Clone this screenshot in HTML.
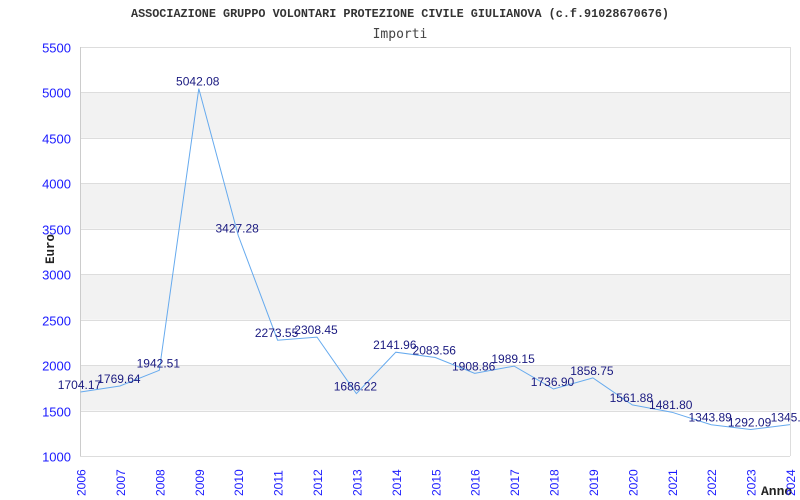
<!DOCTYPE html>
<html><head><meta charset="utf-8"><style>
html,body{margin:0;padding:0;background:#fff;width:800px;height:500px;overflow:hidden}
</style></head><body>
<svg id="c" width="800" height="500" xmlns="http://www.w3.org/2000/svg" font-family="Liberation Sans, sans-serif">
<text x="400" y="17" text-anchor="middle" font-family="Liberation Mono, monospace" font-weight="bold" font-size="11.8" fill="#333">ASSOCIAZIONE GRUPPO VOLONTARI PROTEZIONE CIVILE GIULIANOVA (c.f.91028670676)</text>
<text x="400" y="38" text-anchor="middle" font-family="DejaVu Sans Mono, monospace" font-size="13" fill="#444">Importi</text>
<text transform="translate(54,264) rotate(-90)" font-family="Liberation Mono, monospace" font-weight="bold" font-size="12.5" fill="#222">Euro</text>
<text x="761" y="495" font-family="Liberation Mono, monospace" font-weight="bold" font-size="13" fill="#222">Anno</text>
<g id="g"></g>
</svg>
<script>
var g=document.getElementById('g'),s='';
function Y(v){return 456-(v-1000)*409/4500}
function X(i){return 80.5+i*(709.5/18)}
for(var v=1500;v<5500;v+=1000){s+='<rect x="80.5" y="'+Y(v+500)+'" width="709.5" height="'+(Y(v)-Y(v+500))+'" fill="#f2f2f2"/>';}
for(var v=1000;v<=5500;v+=500){var y=Math.round(Y(v))+0.5;s+='<line x1="80" x2="790" y1="'+y+'" y2="'+y+'" stroke="#ddd"/>';
s+='<text x="71" y="'+(y+5)+'" text-anchor="end" font-size="13" fill="#1a1aff">'+v+'</text>';}
s+='<line x1="80.5" x2="80.5" y1="47" y2="456" stroke="#ccc"/><line x1="790.5" x2="790.5" y1="47" y2="456" stroke="#ddd"/>';
var d=[1704.17,1769.64,1942.51,5042.08,3427.28,2273.55,2308.45,1686.22,2141.96,2083.56,1908.86,1989.15,1736.90,1858.75,1561.88,1481.80,1343.89,1292.09,1345.2];
var p=[];
for(var i=0;i<d.length;i++){p.push(X(i).toFixed(1)+','+Y(d[i]).toFixed(1));
s+='<text transform="translate('+(X(i)+5)+',496) rotate(-90)" font-size="12" fill="#1a1aff">'+(2006+i)+'</text>';}
s+='<polyline points="'+p.join(' ')+'" fill="none" stroke="#66aaee" stroke-width="1"/>';
for(var i=0;i<d.length;i++){var t=i==18?'1345.2':d[i].toFixed(2);
s+='<text x="'+(X(i)-1)+'" y="'+(Y(d[i])-3)+'" text-anchor="middle" font-size="12" fill="#1a1a80">'+t+'</text>';}
g.innerHTML=s;
</script>
</body></html>
